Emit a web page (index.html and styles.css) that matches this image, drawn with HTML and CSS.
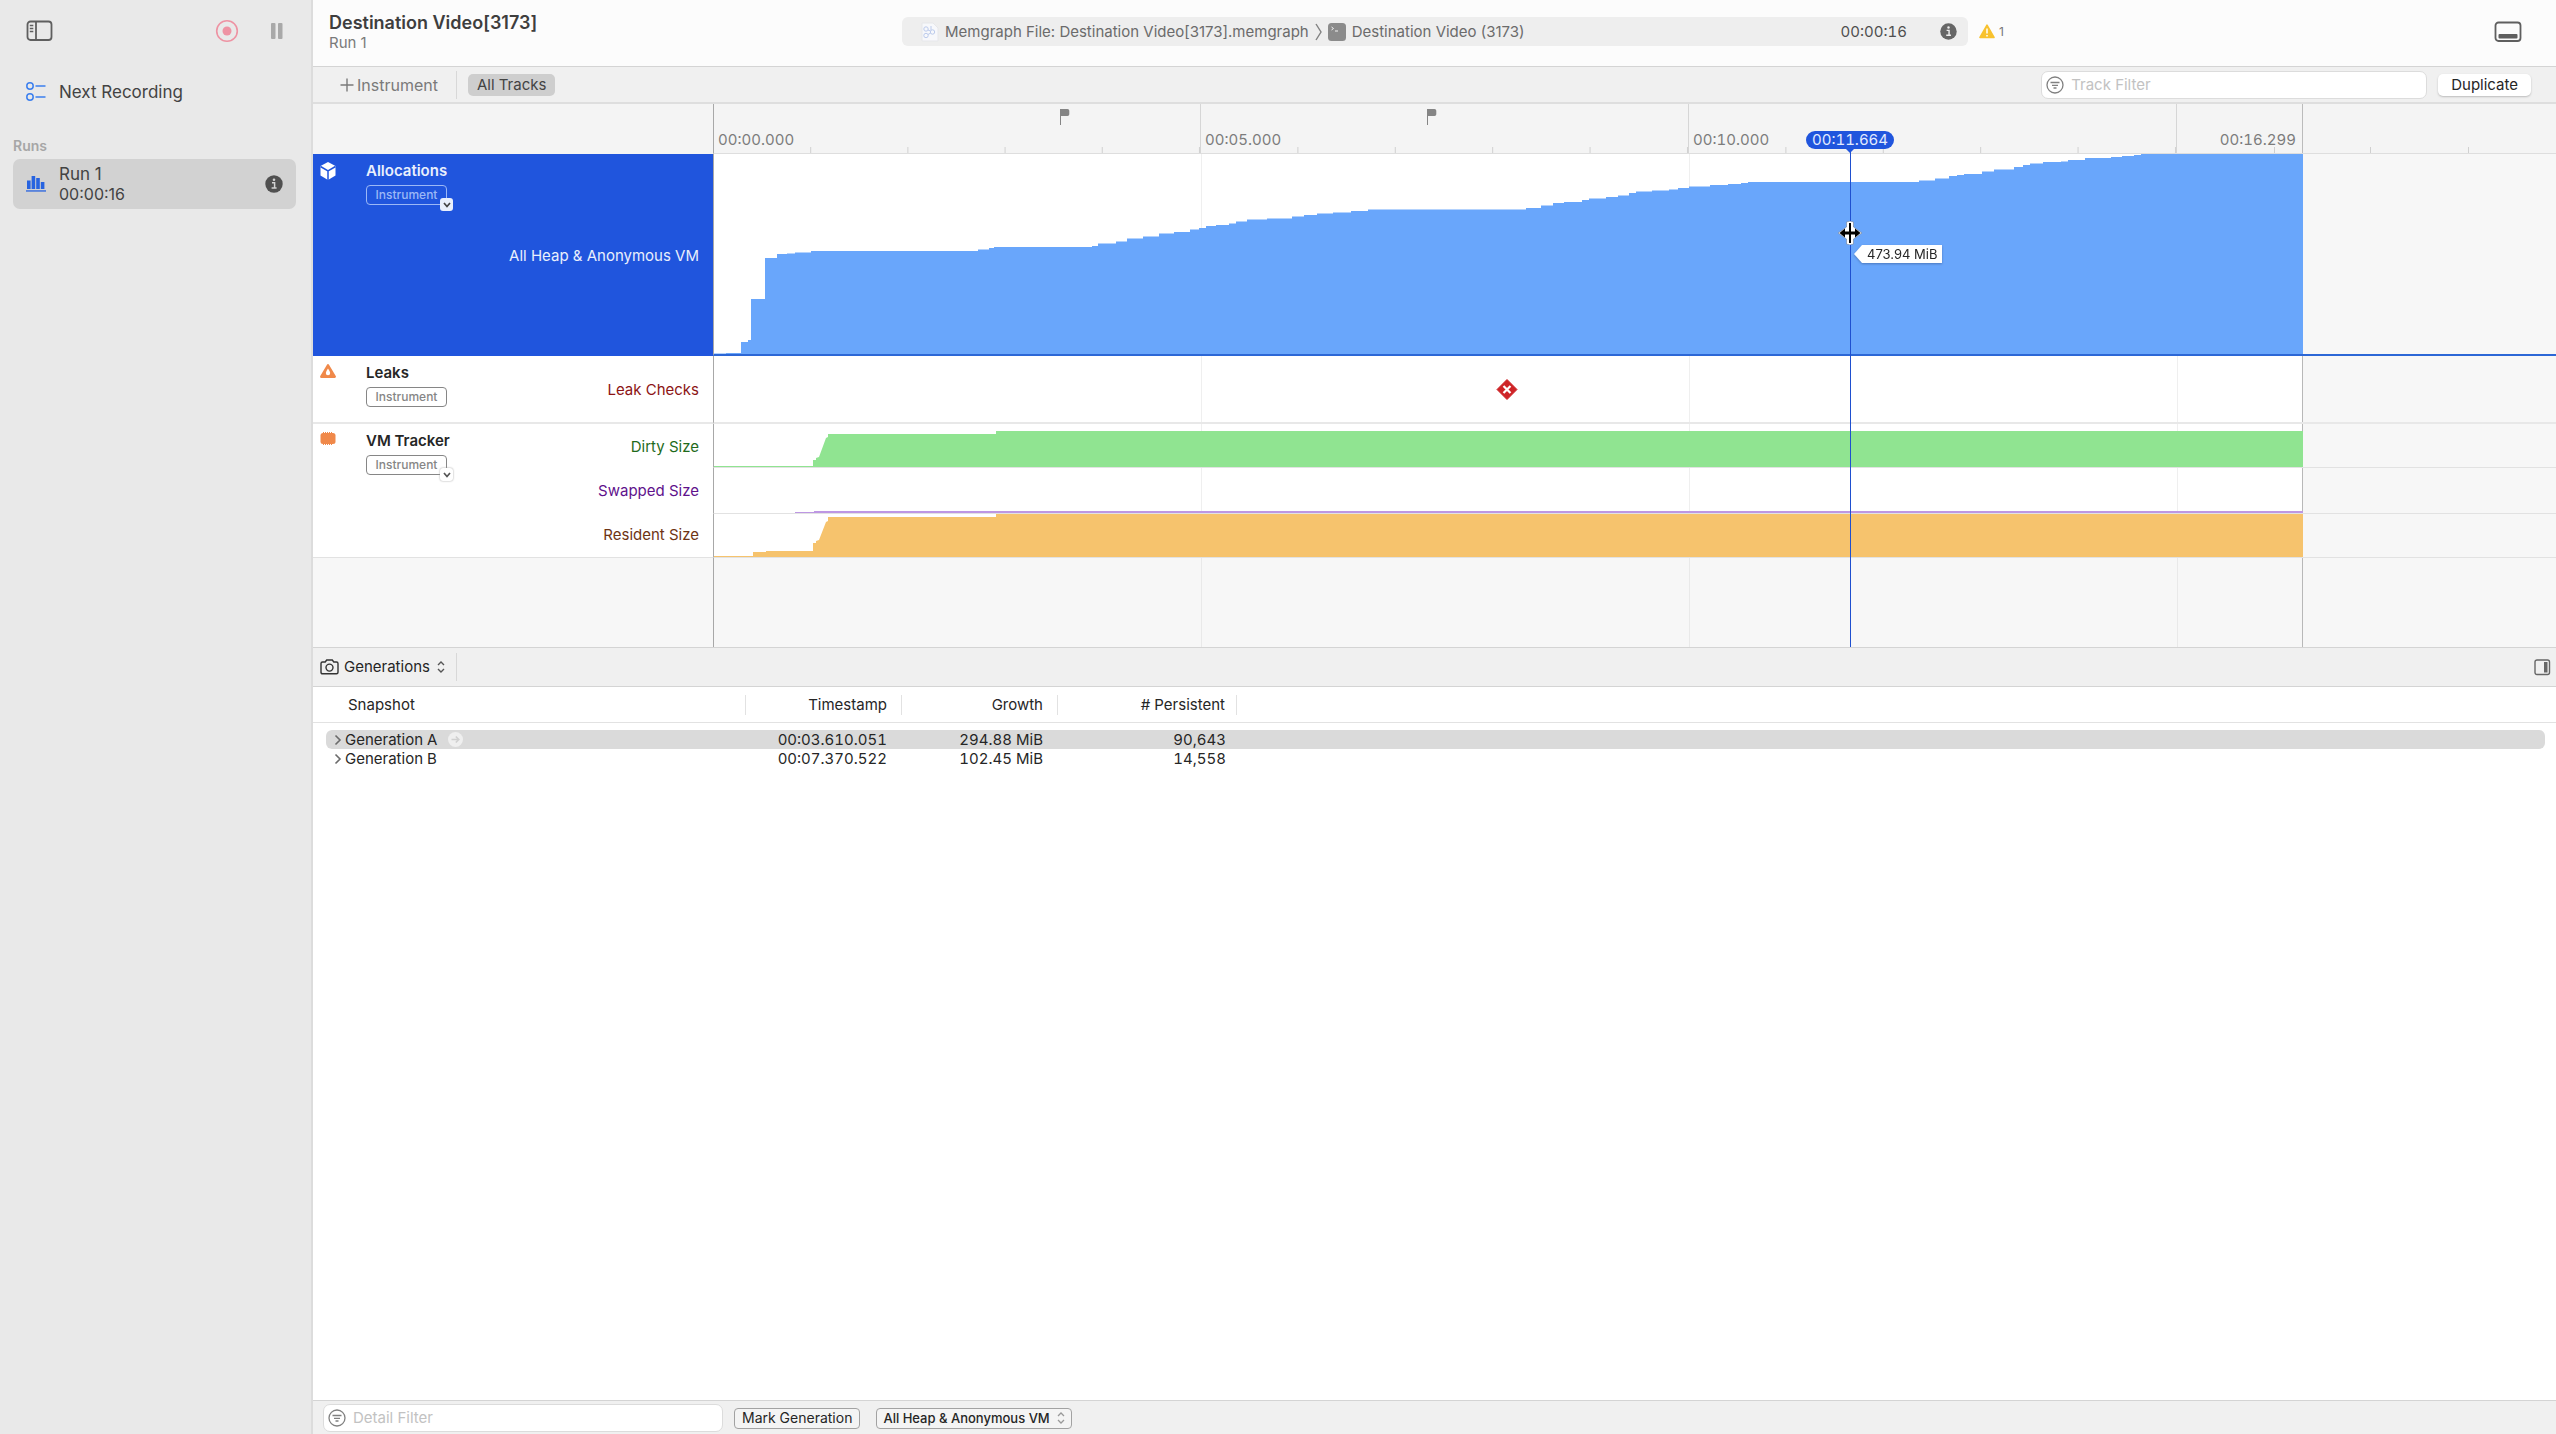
FILE: index.html
```html
<!DOCTYPE html>
<html lang="en">
<head>
<meta charset="utf-8">
<title>Destination Video[3173] – Run 1</title>
<link rel="stylesheet" href="styles.css">
</head>
<body>
<div class="app">
  <aside class="sidebar">
    <div class="sidebar-bar">
      <button class="icon-btn push" aria-label="Toggle sidebar">
        <svg width="28" height="22" viewBox="0 0 28 22" fill="none" stroke="#5f5f5f" stroke-width="1.8"><rect x="1.5" y="1.5" width="24" height="18.500" rx="3"/><path d="M10 1.500v18.500"/><path d="M3.800 5.500h3.500M3.800 8.500h3.500M3.800 11.500h3.500" stroke-width="1.300"/></svg>
      </button>
      <button class="icon-btn" aria-label="Record">
        <svg width="24" height="24" viewBox="0 0 24 24"><circle cx="12" cy="12" r="10.300" fill="none" stroke="#ee93a3" stroke-width="1.600"/><circle cx="12" cy="12" r="4.500" fill="#ee93a3"/></svg>
      </button>
      <button class="icon-btn" aria-label="Pause">
        <svg width="14" height="16" viewBox="0 0 14 16" fill="#a9a9a9"><rect x="1" y="0" width="4.500" height="16" rx="1"/><rect x="8" y="0" width="4.500" height="16" rx="1"/></svg>
      </button>
    </div>
    <a class="next" href="#next">
      <svg width="20" height="22" viewBox="0 0 20 22" fill="none" stroke="#3b7fee" stroke-width="1.500"><circle cx="4" cy="5" r="3.200"/><circle cx="4" cy="16" r="3.200"/><path d="M9.500 5h10M9.500 16h10"/></svg>
      Next Recording
    </a>
    <h2 class="runs">Runs</h2>
    <a class="run" href="#run1">
      <svg width="20" height="16" viewBox="0 0 20 16" fill="#2763e0"><rect x="1" y="4.500" width="3.600" height="8.500"/><rect x="5.600" y="0" width="3.600" height="13"/><rect x="10.200" y="2" width="3.600" height="11"/><rect x="14.800" y="6" width="3.600" height="7"/><rect x="0" y="14.300" width="20" height="1.300"/></svg>
      <span class="run-text"><span>Run 1</span><span class="run-time">00:00:16</span></span>
      <svg width="18" height="18" viewBox="0 0 18 18"><circle cx="9" cy="9" r="8.700" fill="#505050"/><circle cx="9" cy="4.800" r="1.300" fill="#d2d2d2"/><path d="M7 7.800h2.600v5M6.600 13h5" fill="none" stroke="#d2d2d2" stroke-width="1.500"/></svg>
    </a>
  </aside>

  <main class="main">
    <header class="titlebar">
      <div class="title"><h1>Destination Video[3173]</h1><p>Run 1</p></div>
      <div class="pathbar">
        <svg class="doc" width="18" height="20" viewBox="0 0 18 20"><path d="M1 1h11l5 5v13H1z" fill="#f7f8fb" stroke="#e6e7ea"/><g fill="none" stroke="#bccbec"><circle cx="5" cy="7" r="2.200"/><circle cx="5" cy="13.500" r="2.200"/><circle cx="11.500" cy="10" r="2.200"/><path d="M7 8l2.500 1M7 12.500l2.700-1.500M10 4v4"/></g></svg>
        <span>Memgraph File: Destination Video[3173].memgraph</span>
        <svg width="7" height="18" viewBox="0 0 7 18" fill="none" stroke="#808080" stroke-width="1.400"><path d="M1 1l5 8-5 8"/></svg>
        <svg width="18" height="18" viewBox="0 0 18 18"><rect width="18" height="18" rx="3.500" fill="#8b8b8b"/><path d="M3.500 4l2 1.500-2 1.500M7 8h3" fill="none" stroke="#f2f2f2"/></svg>
        <span>Destination Video (3173)</span>
        <time class="elapsed">00:00:16</time>
        <svg width="17" height="17" viewBox="0 0 18 18"><circle cx="9" cy="9" r="8.700" fill="#666"/><circle cx="9" cy="4.800" r="1.300" fill="#eee"/><path d="M7 7.800h2.600v5M6.600 13h5" fill="none" stroke="#eee" stroke-width="1.500"/></svg>
      </div>
      <div class="warn">
        <svg width="16" height="15" viewBox="0 0 16 15"><path d="M8 1.200L15 13.500H1z" fill="#f8c22e" stroke="#f8c22e" stroke-width="1.600" stroke-linejoin="round"/><path d="M8 4.500v5M8 11v1.600" stroke="#fff" stroke-width="1.500"/></svg>
        <span>1</span>
      </div>
      <button class="icon-btn" aria-label="Toggle detail area">
        <svg width="28" height="22" viewBox="0 0 28 22"><rect x="1.500" y="1.500" width="25" height="18.500" rx="3" fill="none" stroke="#5f5f5f" stroke-width="1.800"/><rect x="4.500" y="13" width="19" height="4.500" rx="1" fill="#5f5f5f"/></svg>
      </button>
    </header>

    <div class="toolbar">
      <button class="add"><svg width="14" height="14" viewBox="0 0 14 14" stroke="#7a7a7a" stroke-width="1.400"><path d="M7 .5v13M.5 7h13"/></svg>Instrument</button>
      <span class="sep"></span>
      <button class="pill push">All Tracks</button>
      <label class="filter track-filter">
        <svg width="18" height="18" viewBox="0 0 18 18" fill="none" stroke="#808080" stroke-width="1.300"><circle cx="9" cy="9" r="8"/><path d="M4.500 6.500h9M6 9.300h6M7.500 12h3"/></svg>
        <input type="text" placeholder="Track Filter" aria-label="Track Filter">
      </label>
      <button class="duplicate">Duplicate</button>
    </div>

    <section class="timeline">
      <div class="row ruler-row">
        <div class="names"></div>
        <div class="ruler">
          <div class="seg">00:00.000</div>
          <div class="seg">00:05.000</div>
          <div class="seg">00:10.000</div>
          <div class="seg last">00:16.299</div>
          <div class="seg rest"></div>
          <svg class="flag" style="left:346px" width="10" height="16" viewBox="0 0 10 16" fill="#858585"><path d="M0 0h7.500q1.800 0 1.800 1.800v3.400q0 1.800-1.800 1.800H1v9H0z"/></svg>
          <svg class="flag" style="left:713px" width="10" height="16" viewBox="0 0 10 16" fill="#858585"><path d="M0 0h7.500q1.800 0 1.800 1.800v3.400q0 1.800-1.800 1.800H1v9H0z"/></svg>
        </div>
      </div>

      <div class="row alloc">
        <div class="names">
          <svg class="kind" width="16" height="18" viewBox="0 0 16 18"><path d="M8 0l7.500 4v9.500L8 18 .5 13.500V4z" fill="#fff"/><path d="M.5 4.500L8 9l7.500-4.500M8 9v9" fill="none" stroke="#2055dd" stroke-width="1.500"/></svg>
          <div class="ident"><h3>Allocations</h3><button class="tag">Instrument<span class="badge"><svg width="8" height="6" viewBox="0 0 8 6" fill="none" stroke="#444" stroke-width="1.700"><path d="M1 1l3 3.500L7 1"/></svg></span></button></div>
          <div class="lanes"><span>All Heap &amp; Anonymous VM</span></div>
        </div>
        <div class="plot">
          <svg class="chart" width="1589" height="200" viewBox="714 154 1589 200"><path fill="#69a6fb" d="M714 354V353.500H726V353H741V342H748V340H751V299H765V258H777V254H787V253.500H795V252.500H811V251H978V249.500H989V248H994V247H1092V246H1098V243.500H1116V241.500H1127V238.500H1143V236.500H1159V233.500H1174V232H1190V229.500H1199V228H1206V226H1216V225H1229V223.500H1236V221.500H1247V219.500H1267V218.500H1292V216.500H1304V215H1317V213.500H1333V212.500H1351V211H1368V209.500H1526V208H1541V205.500H1553V203H1564V202H1582V200H1589V198.500H1606V197H1618V195.500H1629V193H1636V191.500H1652V190.500H1669V189.500H1678V188H1689V186.500H1710V185H1728V184H1741V183H1748V182H1919V180.500H1935V178.500H1949V176H1957V175H1964V174H1982V171.500H1994V169.500H2014V167H2023V165H2030V163.500H2043V162H2061V161.500H2068V160H2085V158H2111V157H2122V156H2134V155H2141V154H2303V354z"/></svg>
        </div>
      </div>

      <div class="row leaks">
        <div class="names">
          <svg class="kind" width="16" height="14" viewBox="0 0 16 14"><path d="M8 1.300L14.700 12.700H1.300z" fill="#f0894a" stroke="#f0894a" stroke-width="2.400" stroke-linejoin="round"/><path d="M8 4.500q2.200 3.200 2.200 4.600a2.200 2.200 0 0 1-4.400 0Q5.800 7.700 8 4.500z" fill="#fff"/></svg>
          <div class="ident"><h3>Leaks</h3><button class="tag">Instrument</button></div>
          <div class="lanes"><span class="c-leak">Leak Checks</span></div>
        </div>
        <div class="plot">
          <svg class="chart" width="1589" height="66" viewBox="714 356 1589 66"><path d="M1507 379.500l10 10-10 10-10-10z" fill="#ce2427" stroke="#ce2427" stroke-linejoin="round"/><path d="M1503.500 386l7 7M1510.500 386l-7 7" stroke="#fff" stroke-width="2.200"/></svg>
        </div>
      </div>

      <div class="row vm">
        <div class="names">
          <svg class="kind" width="16" height="14" viewBox="0 0 16 14" fill="#f0894a"><rect x=".5" y="1" width="15" height="11" rx="2.500"/><path d="M3 .5h10M3 12.500h10" stroke="#f0894a" stroke-dasharray="1 1"/></svg>
          <div class="ident"><h3>VM Tracker</h3><button class="tag">Instrument<span class="badge"><svg width="8" height="6" viewBox="0 0 8 6" fill="none" stroke="#555" stroke-width="1.700"><path d="M1 1l3 3.500L7 1"/></svg></span></button></div>
          <div class="lanes"><span class="c-dirty">Dirty Size</span><span class="c-swap">Swapped Size</span><span class="c-res">Resident Size</span></div>
        </div>
        <div class="plots">
          <div class="plot"><svg class="chart" width="1589" height="43" viewBox="714 424 1589 43"><path fill="#90e491" d="M714 467V466H813V460H816V458L819 457 826 438 828 437V434H996V431H2303V467z"/></svg></div>
          <div class="plot"><svg class="chart" width="1589" height="45" viewBox="714 468 1589 45"><path fill="#bd97e3" d="M795 513V512H814V511H2303V513z"/></svg></div>
          <div class="plot"><svg class="chart" width="1589" height="43" viewBox="714 514 1589 43"><path fill="#f6c36d" d="M714 557V556H753V552H766V551H813V543H816V541L819 540 826 522 828 521V517H996V514H2303V557z"/></svg></div>
        </div>
      </div>

      <div class="row empty"><div class="names"></div><div class="plot"></div></div>

      <div class="playhead" style="left:1537px">
        <span class="bubble">00:11.664</span>
        <svg class="cursor" width="26" height="24" viewBox="0 0 26 24"><path d="M13 0l3.500 1v5l8.500 6-8.500 6v5L13 24l-3.500-1v-5L1 12l8.500-6V1z" fill="#fff" stroke="#6f7f99" stroke-width=".6"/><path d="M12 2h2v20h-2z"/><path d="M2.500 12L8 7.500v3h10v-3l5.500 4.500L18 16.500v-3H8v3z" fill="#000"/></svg>
        <span class="tip"><svg width="8" height="18" viewBox="0 0 8 18"><path d="M8 0L0 9l8 9z" fill="#fff"/></svg><span>473.94 MiB</span></span>
      </div>
    </section>

    <div class="detail-bar">
      <svg width="19" height="16" viewBox="0 0 19 16" fill="none" stroke="#333" stroke-width="1.400"><path d="M1 4.500q0-1.500 1.500-1.500h2.700l1.500-2h5.600l1.500 2h2.700Q18 3 18 4.500v8.800q0 1.500-1.500 1.500h-14Q1 14.800 1 13.300z"/><circle cx="9.500" cy="8.600" r="3.500"/></svg>
      <span class="popup plain"><select aria-label="Detail view"><option>Generations</option></select><svg width="8" height="12" viewBox="0 0 8 12" fill="none" stroke="#555" stroke-width="1.400"><path d="M1 4l3-3 3 3M1 8l3 3 3-3"/></svg></span>
      <span class="sep"></span>
      <button class="icon-btn pull" aria-label="Toggle inspector">
        <svg width="17" height="17" viewBox="0 0 17 17"><rect x="1" y="1" width="14.500" height="14.500" rx="2" fill="none" stroke="#666" stroke-width="1.400"/><rect x="10" y="3" width="3.500" height="10.500" fill="#666"/></svg>
      </button>
    </div>

    <section class="detail">
      <table>
        <colgroup><col class="w1"><col class="w2"><col class="w3"><col class="w4"><col></colgroup>
        <thead><tr><th><span>Snapshot</span></th><th><span>Timestamp</span></th><th><span>Growth</span></th><th><span># Persistent</span></th><th></th></tr></thead>
        <tbody>
          <tr class="selected"><td><div class="gen"><button aria-label="Expand Generation A"><svg width="8" height="12" viewBox="0 0 8 12" fill="none" stroke="#6b6b6b" stroke-width="1.600"><path d="M1.500 1.500L6 6l-4.500 4.500"/></svg></button>Generation A<svg class="go" width="15" height="15" viewBox="0 0 15 15"><circle cx="7.500" cy="7.500" r="7.500" fill="#efefef"/><path d="M3.500 7.500h7M7.800 4.500l3 3-3 3" fill="none" stroke="#d0d0d0" stroke-width="1.600"/></svg></div></td><td>00:03.610.051</td><td>294.88 MiB</td><td>90,643</td><td></td></tr>
          <tr><td><div class="gen"><button aria-label="Expand Generation B"><svg width="8" height="12" viewBox="0 0 8 12" fill="none" stroke="#6b6b6b" stroke-width="1.600"><path d="M1.500 1.500L6 6l-4.500 4.500"/></svg></button>Generation B</div></td><td>00:07.370.522</td><td>102.45 MiB</td><td>14,558</td><td></td></tr>
        </tbody>
      </table>
    </section>

    <footer class="footer">
      <label class="filter detail-filter">
        <svg width="18" height="18" viewBox="0 0 18 18" fill="none" stroke="#808080" stroke-width="1.300"><circle cx="9" cy="9" r="8"/><path d="M4.500 6.500h9M6 9.300h6M7.500 12h3"/></svg>
        <input type="text" placeholder="Detail Filter" aria-label="Detail Filter">
      </label>
      <button class="outline">Mark Generation</button>
      <span class="popup outline"><select aria-label="Allocation type"><option>All Heap &amp; Anonymous VM</option></select><svg width="8" height="12" viewBox="0 0 8 12" fill="none" stroke="#999" stroke-width="1.300"><path d="M1 4l3-3 3 3M1 8l3 3 3-3"/></svg></span>
    </footer>
  </main>
</div>
</body>
</html>
```
FILE: styles.css
```css
* { box-sizing: border-box; }
body { margin: 0; font: 15px/18px Inter, "Liberation Sans", sans-serif; color: #262626; background: #fff; }
h1, h2, h3, p { margin: 0; font-size: inherit; }
button, input, select { font: inherit; color: inherit; margin: 0; padding: 0; border: 0; background: none; appearance: none; outline: 0; }
svg { display: block; flex: none; }
a { color: inherit; text-decoration: none; }
.app { display: grid; grid-template-columns: 313px minmax(0, 1fr); min-height: 100vh; }
.push { margin-right: auto; }
.pull { margin-left: auto; }

/* Sidebar */
.sidebar { background: #e9e9e9; border-right: 2px solid #dcdcdc; color: #434343; font-size: 17px; line-height: 20px; padding: 0 15px 0 13px; }
.sidebar-bar { display: flex; align-items: center; gap: 31px; height: 62px; padding: 0 12px 0 13px; }
.next { display: flex; align-items: center; gap: 13px; height: 60px; padding-left: 13px; }
.runs { color: #a6a6a6; font-size: 14px; font-weight: 600; line-height: 18px; margin: 15px 0 4px; }
.run { display: flex; align-items: center; gap: 13px; height: 50px; padding: 0 13px; background: #d2d2d2; border-radius: 7px; }
.run-text { display: flex; flex-direction: column; flex: 1; }
.run-time { font-size: 16px; }

/* Title bar */
.titlebar { display: flex; align-items: center; height: 67px; padding: 0 34px 3px 16px; background: #fcfcfc; border-bottom: 1px solid #d4d4d4; }
.title { width: 573px; }
.title h1 { font-size: 18px; line-height: 22px; font-weight: 600; color: #3e3e3e; }
.title p { color: #7a7a7a; font-size: 15px; line-height: 18px; }
.pathbar { display: flex; align-items: center; gap: 6px; flex: 1; height: 29px; padding: 0 11px 0 19px; background: #eee; border-radius: 6px; color: #6b6b6b; }
.elapsed { margin: 0 27px 0 auto; color: #4f4f4f; font-variant-numeric: tabular-nums; }
.warn { display: flex; align-items: center; gap: 4px; width: 526px; padding-left: 11px; font-size: 12px; color: #777; }

.toolbar { display: flex; align-items: center; height: 37px; padding: 1px 25px 0 27px; background: #f0f0f0; border-bottom: 2px solid #dedede; }
.add { display: flex; align-items: center; gap: 3px; color: #7a7a7a; font-size: 16px; }
.sep { width: 1px; height: 28px; margin: 0 11px 0 18px; background: #d8d8d8; }
.pill { height: 22px; padding: 0 9px; border-radius: 5px; background: #cecece; color: #434343; }
.filter { display: flex; align-items: center; gap: 7px; height: 28px; padding: 0 4px; background: #fff; border: 1px solid #dcdcdc; border-radius: 7px; }
.filter input { flex: 1; min-width: 0; }
.filter input::placeholder { color: #c2c2c2; opacity: 1; }
.track-filter { width: 386px; margin-right: 11px; }
.duplicate { height: 22px; padding: 0 13px; background: #fff; border-radius: 5px; box-shadow: 0 1px 2px #bbb; }

/* Timeline */
.timeline { position: relative; overflow: hidden; background: #f7f7f7; }
.row { display: grid; grid-template-columns: 400px minmax(0, 1fr); }
.ruler { position: relative; display: flex; height: 50px; background: #f4f4f4; border-left: 1px solid #a8a8a8; border-bottom: 1px solid #dedede; color: #7c7c7c; font-variant-numeric: tabular-nums; overflow: hidden; }
.ruler-row .names { background: #f4f4f4; }
.seg { flex: none; display: flex; align-items: flex-end; width: 488px; padding: 0 4px; padding-bottom: 4px; border-right: 1px solid #d6d6d6; background: linear-gradient(90deg, transparent calc(100% - 1px), #d0d0d0 0) 0 100% / 20% 6px repeat-x; }
.seg:first-child { width: 487px; }
.seg.last { width: 126px; padding-right: 6px; justify-content: flex-end; background-size: 98px 6px; border-color: #bbb; }
.seg.rest { flex: 1; border: 0; background-position: -30px 100%; background-size: 98px 6px; }
.flag { position: absolute; top: 5px; }
.names { display: flex; background: #fff; }
.kind { margin: 8px 30px 0 7px; }
.ident { padding-top: 8px; }
.ident h3 { font-size: 15px; font-weight: 600; line-height: 18px; }
.tag { position: relative; display: block; height: 20px; margin-top: 5px; padding: 0 7px; border: 1px solid #868686; border-radius: 4px; color: #868686; font-size: 12px; font-weight: 500; line-height: 18px; width: 81px; }
.badge { position: absolute; right: -7px; bottom: -7px; display: grid; place-items: center; width: 13px; height: 13px; border-radius: 3px; background: #fff; box-shadow: 0 0 2px #999; }
.lanes { flex: 1; display: flex; flex-direction: column; padding: 1px 14px 0 0; text-align: right; }
.lanes span { flex: 1; display: grid; align-items: center; }
.plot { border-left: 1px solid #a8a8a8; border-bottom: 1px solid #e2e2e2; background: linear-gradient(90deg, transparent 1588px, #b8b8b8 0, #b8b8b8 1589px, #f7f7f7 0), repeating-linear-gradient(90deg, #fff 0, #fff 487px, #efefef 487px, #efefef 488px); overflow: hidden; }
.alloc .names { background: #2055dd; color: #e9effc; }
.alloc .plot { height: 202px; border-bottom: 2px solid #2c67d6; }
.alloc .tag { color: #9cb8f6; border-color: #9cb8f6; }
.alloc .badge { box-shadow: none; background: #e9effc; }
.leaks .plot { height: 68px; border-bottom: 2px solid #e8e8e8; }
.leaks .names { border-bottom: 2px solid #e8e8e8; }
.vm .plot { height: 44px; }
.vm .plot:nth-child(2) { height: 46px; }
.vm .names { border-bottom: 1px solid #e2e2e2; }
.c-leak { color: #8c1414; }
.c-dirty { color: #1f6b1c; }
.c-swap { color: #5f128c; }
.c-res { color: #6e3414; }
.empty .names { background: #f7f7f7; }
.empty .plot { height: 89px; border-bottom: 0; background: linear-gradient(90deg, transparent 1588px, #b8b8b8 0, #b8b8b8 1589px, #f7f7f7 0), repeating-linear-gradient(90deg, #f7f7f7 0, #f7f7f7 487px, #e9e9e9 487px, #e9e9e9 488px); }
.playhead { position: absolute; top: 44px; bottom: 0; width: 1px; background: #1f50cf; }
.bubble { position: absolute; left: -44px; bottom: 100%; width: 88px; margin-bottom: -1px; border-radius: 9px; background: #2055dd; color: #e3ebff; text-align: center; font-variant-numeric: tabular-nums; }
.bubble::after { content: ""; position: absolute; left: 39px; top: 17px; border: 5px solid transparent; border-top-color: #2055dd; border-bottom: 0; }
.cursor { position: absolute; left: -13px; top: 73px; }
.tip { position: absolute; left: 4px; top: 97px; display: flex; font-size: 13px; white-space: nowrap; filter: drop-shadow(0 1px 1px #4a78bd); }
.tip span { padding: 0 5px; background: #fff; }

/* Detail area */
.detail-bar { display: flex; align-items: center; height: 40px; padding: 0 5px 0 7px; background: #f0f0f0; border-top: 1px solid #d4d4d4; border-bottom: 1px solid #d4d4d4; }
.detail-bar .sep { margin: 0 0 0 11px; }
.popup { display: flex; align-items: center; gap: 7px; }
.popup.plain { margin-left: 5px; }
.detail { flex: 1; background: #fff; }
.main { display: flex; flex-direction: column; }
table { width: 100%; table-layout: fixed; border-collapse: separate; border-spacing: 0; }
.w1 { width: 433px; } .w2 { width: 156px; } .w3 { width: 156px; } .w4 { width: 179px; }
th { height: 36px; padding: 0; border-bottom: 1px solid #e2e2e2; font-weight: 400; text-align: right; }
th span { display: block; padding: 1px 14px 1px 35px; border-right: 1px solid #e2e2e2; }
th:first-child { text-align: left; }
th:nth-child(4) span, td:nth-child(4) { padding-right: 11px; }
tbody::before { content: ""; display: block; height: 7px; }
td { height: 19px; padding: 0 15px 0 0; text-align: right; font-variant-numeric: tabular-nums; }
td:first-child { border-left: 13px solid transparent; background-clip: padding-box; border-radius: 19px 0 0 19px / 6px 0 0 6px; }
td:last-child { border-right: 11px solid transparent; background-clip: padding-box; border-radius: 0 17px 17px 0 / 0 6px 6px 0; }
.selected td { background-color: #dadada; }
.gen { display: flex; align-items: center; padding-left: 8px; gap: 3px; }
.go { margin-left: 8px; }
.footer { display: flex; align-items: center; height: 34px; padding: 1px 10px 0; background: #f0f0f0; border-top: 1px solid #d4d4d4; font-size: 14px; }
.detail-filter { width: 400px; margin-right: 11px; font-size: 15px; }
.outline { height: 21px; padding: 0 7px; border: 1px solid #a2a2a2; border-radius: 4px; background: #f4f4f4; }
.popup.outline { margin-left: 16px; padding: 0 6px; font-size: 13px; font-weight: 500; }
```
